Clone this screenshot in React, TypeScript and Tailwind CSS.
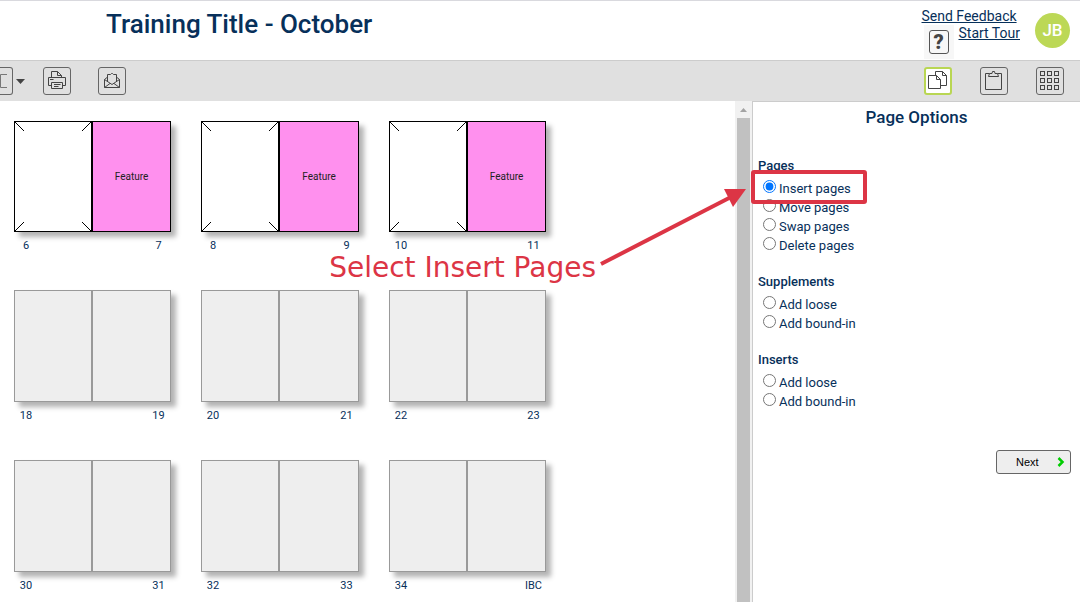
import type { ReactNode } from 'react';
import { clsx } from 'clsx';

interface Spread {
  left: string;
  right: string;
  feature?: boolean;
}

interface OptionGroup {
  title: string;
  options: string[];
}

const spreads: Spread[] = [
  { left: '6', right: '7', feature: true },
  { left: '8', right: '9', feature: true },
  { left: '10', right: '11', feature: true },
  { left: '18', right: '19' },
  { left: '20', right: '21' },
  { left: '22', right: '23' },
  { left: '30', right: '31' },
  { left: '32', right: '33' },
  { left: '34', right: 'IBC' },
];

const optionGroups: OptionGroup[] = [
  { title: 'Pages', options: ['Insert pages', 'Move pages', 'Swap pages', 'Delete pages'] },
  { title: 'Supplements', options: ['Add loose', 'Add bound-in'] },
  { title: 'Inserts', options: ['Add loose', 'Add bound-in'] },
];

function Icon({ children }: { children: ReactNode }) {
  return (
    <svg width="20" height="20" viewBox="0 0 20 20" fill="none" stroke="#444" aria-hidden="true">
      {children}
    </svg>
  );
}

function ToolButton({
  label,
  active = false,
  children,
}: {
  label: string;
  active?: boolean;
  children: ReactNode;
}) {
  return (
    <button
      type="button"
      aria-label={label}
      className={clsx(
        'flex h-7 w-7 items-center justify-center rounded-[3px]',
        active ? 'border-2 border-[#b9d653] bg-white' : 'border border-[#666]',
      )}
    >
      {children}
    </button>
  );
}

function Header() {
  return (
    <header className="flex h-[60px] items-start justify-between border-t border-[#d9d9de] bg-white">
      <h1 className="pt-2 pl-[106px] text-[26px] leading-[30px] font-medium">
        Training Title - October
      </h1>
      <div className="flex items-start gap-[15px] pr-[10px]">
        <div className="pt-[7px] text-[14px] leading-[17px]">
          <a href="#feedback" className="block underline">
            Send Feedback
          </a>
          <div className="flex items-start gap-[5px] pl-[2px]">
            <div className="flex h-[34px] w-[30px] items-center justify-center bg-[#f7f7f7]">
              <button
                type="button"
                aria-label="Help"
                className="h-6 w-5 rounded-[3px] border border-[#555] text-[20px] leading-[22px] font-black text-[#444]"
              >
                ?
              </button>
            </div>
            <a href="#tour" className="underline">
              Start Tour
            </a>
          </div>
        </div>
        <div className="mt-3 flex h-[35px] w-[35px] items-center justify-center rounded-full bg-[#bcd856] text-[17px] font-medium text-white">
          JB
        </div>
      </div>
    </header>
  );
}

function Toolbar() {
  return (
    <div className="flex h-[41px] items-center justify-between border-t border-[#ccc] bg-[#e0e0e0] pr-4">
      <div className="flex items-center">
        <button
          type="button"
          aria-label="View"
          className="h-7 w-[13px] rounded-r-[3px] border border-l-0 border-[#666]"
        >
          <svg width="8" height="16" viewBox="0 0 8 16" fill="none" stroke="#777" aria-hidden="true">
            <path d="M7 1.5H0.5V14.5H7" />
          </svg>
        </button>
        <svg width="9" height="5" viewBox="0 0 9 5" className="ml-[3px] fill-[#444]" aria-hidden="true">
          <path d="M0 0h9L4.5 5z" />
        </svg>
        <div className="ml-[18px] flex gap-[27px]">
          <ToolButton label="Print">
            <Icon>
              <path d="M4.5 6.5V0.5H10.5L14.5 4.5V6.5M10.5 0.5V4.5H14.5" />
              <path d="M4.5 14.5H1.5V6.5H18.5V14.5H15.5" />
              <path d="M4.5 11.5H15.5V17.5H4.5zM7 13.5H13.5M7 15.5H11.5M3 8.5H6.5" />
            </Icon>
          </ToolButton>
          <ToolButton label="Send">
            <Icon>
              <path d="M5 6.5L2.5 8.5V16.5H17.5V8.5L15 6.5" />
              <path d="M5.5 10.5V3.5H8.5L9.5 2.5H10.5L11.5 3.5H14.5V10.5" />
              <path d="M2.5 8.5L10 13.5L17.5 8.5M2.5 16.5L8 12.5M17.5 16.5L12 12.5" />
            </Icon>
          </ToolButton>
        </div>
      </div>
      <div className="flex gap-7">
        <ToolButton label="Page options" active>
          <Icon>
            <path d="M7.5 4V0.5H14.5L18.5 4.5V14.5H12.5M14.5 0.5V4.5H18.5" />
            <path d="M0.5 4.5H8.5L12.5 8.5V17.5H0.5zM8.5 4.5V8.5H12.5" />
          </Icon>
        </ToolButton>
        <ToolButton label="Clipboard">
          <Icon>
            <path d="M5.5 2.5H1.5V18.5H17.5V2.5H13.5" />
            <path d="M4.5 5.5L5.5 2.5H8L8.5 0.5H10.5L11 2.5H13.5L14.5 5.5z" />
          </Icon>
        </ToolButton>
        <ToolButton label="Grid">
          <Icon>
            {[0.5, 7.5, 14.5].map((y) =>
              [0.5, 7.5, 14.5].map((x) => (
                <rect key={`${x}-${y}`} x={x} y={y} width="4" height="4" />
              )),
            )}
          </Icon>
        </ToolButton>
      </div>
    </div>
  );
}

function PageSpread({ left, right, feature = false }: Spread) {
  return (
    <div>
      <div
        className={clsx(
          'flex border shadow-[5px_5px_5px_rgba(0,0,0,0.3)]',
          feature ? 'h-[111px] border-black bg-white' : 'h-[112px] border-[#999] bg-[#eee]',
        )}
      >
        <div className={clsx('w-[77px] border-r', feature ? 'border-black' : 'border-[#999]')}>
          {feature && (
            <svg className="h-full w-full" viewBox="0 0 76 109" stroke="#000" aria-hidden="true">
              <path d="M0 0L9 9M76 0L67 9M0 109L9 100M76 109L67 100" />
            </svg>
          )}
        </div>
        <div
          className={clsx(
            'flex flex-1 items-center justify-center border-l text-[10px] text-[#222]',
            feature ? 'border-black bg-[#ff90ee]' : 'border-[#999]',
          )}
        >
          {feature && 'Feature'}
        </div>
      </div>
      <div className="mt-[7px] flex justify-between text-[11px] leading-[14px]">
        <span className="w-6 text-center">{left}</span>
        <span className="w-[25px] text-center">{right}</span>
      </div>
    </div>
  );
}

function ScrollRail() {
  return (
    <div className="flex w-[17px] flex-col items-center bg-[#f1f1f1]">
      <div className="flex h-[17px] items-center">
        <svg width="7" height="4" viewBox="0 0 7 4" className="fill-[#a3a3a3]" aria-hidden="true">
          <path d="M3.5 0L7 4H0z" />
        </svg>
      </div>
      <div className="w-[13px] flex-1 bg-[#c1c1c1]" />
    </div>
  );
}

function PageOptions() {
  return (
    <aside className="relative w-[328px] border-t border-l border-[#ccc] px-[5px] pt-[5px]">
      <h2 className="text-center text-[17px] leading-5 font-medium">Page Options</h2>
      <form className="mt-[29px]">
        {optionGroups.map((group, g) => (
          <fieldset key={group.title} className="mb-[17px] text-[13px] leading-[19px]">
            <legend className="mb-1 font-medium">{group.title}</legend>
            {group.options.map((option, i) => (
              <label key={option} className="flex h-[19px] items-start gap-[3px] pl-[5px]">
                <input
                  type="radio"
                  name="page-action"
                  defaultChecked={g === 0 && i === 0}
                  className="mt-px h-[13px] w-[13px]"
                />
                {option}
              </label>
            ))}
          </fieldset>
        ))}
        <div className="mt-[39px] flex justify-end pr-1">
          <button
            type="button"
            className="flex h-6 w-[75px] items-center justify-between rounded-[3px] border border-[#666] bg-[#eee] pr-[5px] pl-[19px] font-['Liberation_Sans',Arial,sans-serif] text-[11px] text-black"
          >
            Next
            <svg width="8" height="10" viewBox="0 0 8 10" fill="none" stroke="#0c0" strokeWidth="2.5" aria-hidden="true">
              <path d="M1.5 1L5.5 5L1.5 9" />
            </svg>
          </button>
        </div>
      </form>
      {/* Highlight round the first option */}
      <div className="pointer-events-none absolute top-[68px] -left-0.5 h-[34px] w-[116px] rounded-[3px] border-4 border-[#dc3545]" />
    </aside>
  );
}

export default function App() {
  return (
    <div className="flex min-h-screen flex-col overflow-hidden bg-white font-[Roboto,sans-serif] text-[#07305a]">
      <Header />
      <Toolbar />
      <main className="flex flex-1">
        <section className="relative flex-1 pt-5 pl-[14px]" aria-label="Flatplan">
          <div className="grid grid-cols-[157px_158px_157px] gap-x-[30px] gap-y-[37px]">
            {spreads.map((spread) => (
              <PageSpread key={spread.left} {...spread} />
            ))}
          </div>
          {/* Callout text and arrow lie over the flatplan and the scrollbar */}
          <p className="absolute top-[151px] right-[139px] font-[Tahoma,Verdana,'DejaVu_Sans',sans-serif] text-[28px] leading-8 whitespace-nowrap text-[#dc3545]">
            Select Insert Pages
          </p>
          <svg
            className="pointer-events-none absolute top-[82px] -right-4 z-10"
            width="152"
            height="86"
            viewBox="0 0 152 86"
            aria-hidden="true"
          >
            <path d="M2 81L132 14" stroke="#dc3545" strokeWidth="4" />
            <path d="M147 6L134 24L125 6z" fill="#dc3545" />
          </svg>
        </section>
        <ScrollRail />
        <PageOptions />
      </main>
    </div>
  );
}
